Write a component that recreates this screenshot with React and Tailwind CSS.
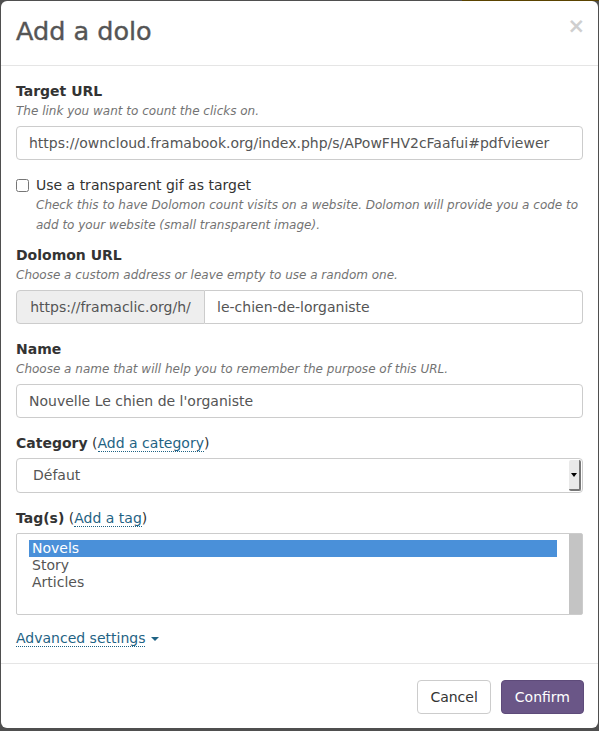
import React from "react";

function Label({ children }) {
  return <div className="text-[14px] leading-[20px] font-bold text-[#333]">{children}</div>;
}
function Help({ children, className = "" }) {
  return <div className={"text-[12px] leading-[20px] italic text-[#737373] " + className}>{children}</div>;
}
function Link({ children }) {
  return (
    <span className="text-[#1f6384] border-b border-dotted border-[#1f6384] leading-[16px] inline-block">{children}</span>
  );
}

export default function App() {
  return (
    <div className="relative w-[599px] h-[731px] bg-[#4f4f4f] pt-px pl-px overflow-hidden font-['DejaVu_Sans',Verdana,sans-serif]">
      <div className="absolute top-0 right-0 w-[137px] h-px bg-[#5a4300]"></div>
      <div className="w-[597px] h-[727px] bg-white rounded-[6px] flex flex-col">
        <div className="h-[65px] border-b border-[#e5e5e5] px-[15px] flex items-center justify-between">
          <div className="text-[25.5px] leading-[34px] text-[#555] -mt-[5px] [-webkit-text-stroke:0.4px_#555]">Add a dolo</div>
          <div className="text-[21px] font-bold text-[#cfcfcf] leading-none -mr-[2px] -mt-[14px]">×</div>
        </div>
        <div className="px-[15px] pt-[15px] pb-[15px] text-[14px] text-[#333] flex flex-col">
          <Label>Target URL</Label>
          <Help className="mb-[5px]">The link you want to count the clicks on.</Help>
          <div className="h-[34px] border border-[#ccc] rounded-[4px] px-[12px] flex items-center text-[#555] mb-[15px]">
            https://owncloud.framabook.org/index.php/s/APowFHV2cFaafui#pdfviewer
          </div>
          <div className="flex flex-col mb-[10px]">
            <div className="flex items-center leading-[20px]">
              <input type="checkbox" readOnly className="w-[13px] h-[13px] m-0 mr-[7px]" />
              <span>Use a transparent gif as target</span>
            </div>
            <Help className="pl-[20px]">
              Check this to have Dolomon count visits on a website. Dolomon will provide you a code to add to your website (small transparent image).
            </Help>
          </div>
          <Label>Dolomon URL</Label>
          <Help className="mb-[5px]">Choose a custom address or leave empty to use a random one.</Help>
          <div className="h-[34px] flex mb-[15px] text-[#555]">
            <div className="w-[189px] bg-[#eee] border border-[#ccc] rounded-l-[4px] flex items-center justify-center">
              https://framaclic.org/h/
            </div>
            <div className="flex-1 border border-l-0 border-[#ccc] rounded-r-[4px] px-[12px] flex items-center">
              le-chien-de-lorganiste
            </div>
          </div>
          <Label>Name</Label>
          <Help className="mb-[5px]">Choose a name that will help you to remember the purpose of this URL.</Help>
          <div className="h-[34px] border border-[#ccc] rounded-[4px] px-[12px] flex items-center text-[#555] mb-[15px]">
            Nouvelle Le chien de l'organiste
          </div>
          <div className="leading-[20px] mb-[5px]">
            <span className="font-bold">Category</span> (<Link>Add a category</Link>)
          </div>
          <div className="h-[35px] border border-[#ccc] rounded-[4px] pl-[16px] pr-[1px] flex items-center justify-between text-[#555] mb-[15px]">
            <span>Défaut</span>
            <div className="w-[12px] h-[31px] bg-[#e9e9e9] border-r-2 border-b-2 border-[#777] rounded-[2px] flex items-center justify-center">
              <div className="w-0 h-0 border-t-[4px] border-t-black border-x-[3px] border-x-transparent"></div>
            </div>
          </div>
          <div className="leading-[20px] mb-[5px]">
            <span className="font-bold">Tag(s)</span> (<Link>Add a tag</Link>)
          </div>
          <div className="h-[82px] border border-[#ccc] rounded-[2px] flex text-[#555] mb-[15px]">
            <div className="flex-1 pl-[12px] pr-[12px] pt-[6px] flex flex-col leading-[17px]">
              <div className="bg-[#4a90d9] text-white pl-[3px]">Novels</div>
              <div className="pl-[3px]">Story</div>
              <div className="pl-[3px]">Articles</div>
            </div>
            <div className="w-[13px] bg-[#c4c4c4]"></div>
          </div>
          <div className="leading-[20px] flex items-center">
            <Link>Advanced settings</Link>
            <div className="ml-[6px] w-0 h-0 border-t-[4px] border-t-[#1f6384] border-x-[4px] border-x-transparent"></div>
          </div>
        </div>
        <div className="border-t border-[#e5e5e5] mt-[1px] px-[14px] pt-[16px] flex justify-end gap-[10px]">
          <div className="h-[34px] px-[12px] border border-[#ccc] rounded-[4px] flex items-center text-[14px] text-[#333]">Cancel</div>
          <div className="h-[34px] px-[13px] border border-[#5e4b7a] bg-[#6a5687] rounded-[4px] flex items-center text-[14px] text-white">Confirm</div>
        </div>
      </div>
    </div>
  );
}
